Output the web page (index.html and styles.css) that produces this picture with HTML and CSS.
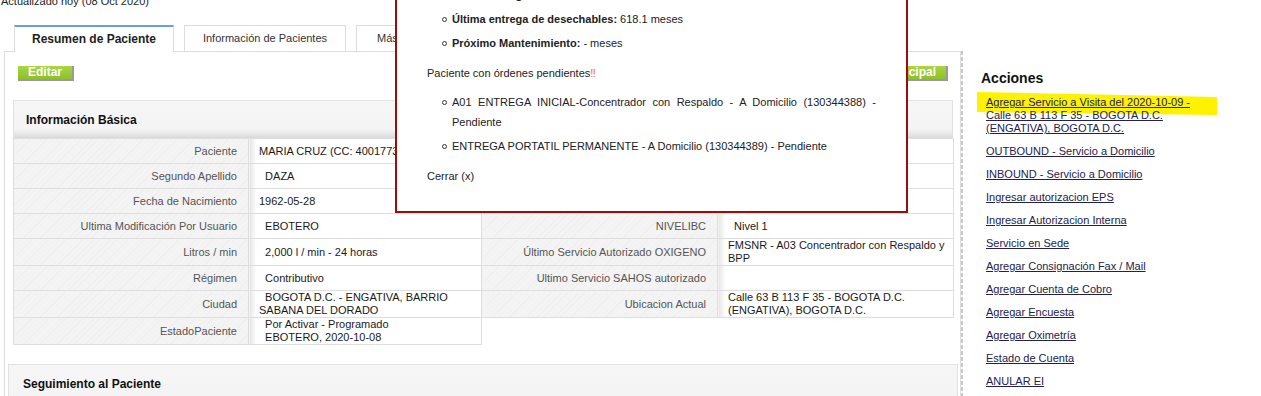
FILE: index.html
```html
<!DOCTYPE html>
<html lang="es">
<head>
    <meta charset="UTF-8">
    <meta name="viewport" content="width=device-width, initial-scale=1.0">
    <title>Resumen de Paciente</title>
    <link rel="stylesheet" href="styles.css">
</head>
<body>
    <div class="page">
        <div class="main">
            <p class="updated">Actualizado hoy (08 Oct 2020)</p>
            <ul class="tabs">
                <li class="tab active">Resumen de Paciente</li>
                <li class="tab tab-wide">Información de Pacientes</li>
                <li class="tab tab-more">Más Información</li>
            </ul>
            <div class="panel">
                <div class="toolbar">
                    <a class="btn" href="#">Editar</a>
                    <a class="btn" href="#">Volver a Principal</a>
                </div>

                <div class="box">
                    <h3 class="box-head">Información Básica</h3>
                    <table class="data">
                        <colgroup>
                            <col style="width: 235px">
                            <col style="width: 233px">
                            <col style="width: 236px">
                            <col style="width: 236px">
                        </colgroup>
                        <tr>
                            <td class="lbl">Paciente</td>
                            <td class="val">MARIA CRUZ (CC: 40017734)</td>
                            <td class="lbl">Teléfono</td>
                            <td class="val">3124567890</td>
                        </tr>
                        <tr>
                            <td class="lbl">Segundo Apellido</td>
                            <td class="val">&nbsp;&nbsp;DAZA</td>
                            <td class="lbl">EPS</td>
                            <td class="val">&nbsp;&nbsp;FAMISANAR</td>
                        </tr>
                        <tr>
                            <td class="lbl">Fecha de Nacimiento</td>
                            <td class="val">1962-05-28</td>
                            <td class="lbl">Tipo de Paciente</td>
                            <td class="val">&nbsp;&nbsp;Oxígeno</td>
                        </tr>
                        <tr>
                            <td class="lbl">Ultima Modificación Por Usuario</td>
                            <td class="val">&nbsp;&nbsp;EBOTERO</td>
                            <td class="lbl">NIVELIBC</td>
                            <td class="val">&nbsp;&nbsp;Nivel 1</td>
                        </tr>
                        <tr>
                            <td class="lbl">Litros / min</td>
                            <td class="val">&nbsp;&nbsp;2,000 l / min - 24 horas</td>
                            <td class="lbl">Último Servicio Autorizado OXIGENO</td>
                            <td class="val">FMSNR - A03 Concentrador con Respaldo y BPP</td>
                        </tr>
                        <tr>
                            <td class="lbl">Régimen</td>
                            <td class="val">&nbsp;&nbsp;Contributivo</td>
                            <td class="lbl">Ultimo Servicio SAHOS autorizado</td>
                            <td class="val"></td>
                        </tr>
                        <tr>
                            <td class="lbl">Ciudad</td>
                            <td class="val">&nbsp;&nbsp;BOGOTA D.C. - ENGATIVA, BARRIO SABANA DEL DORADO</td>
                            <td class="lbl">Ubicacion Actual</td>
                            <td class="val">Calle 63 B 113 F 35 - BOGOTA D.C. (ENGATIVA), BOGOTA D.C.</td>
                        </tr>
                        <tr>
                            <td class="lbl">EstadoPaciente</td>
                            <td class="val">&nbsp;&nbsp;Por Activar - Programado<br>&nbsp;&nbsp;EBOTERO, 2020-10-08</td>
                        </tr>
                    </table>
                </div>

                <div class="box box-follow">
                    <h3 class="box-head">Seguimiento al Paciente</h3>
                </div>
            </div>
        </div>

        <div class="divider"></div>

        <div class="side">
            <h2 class="side-title">Acciones</h2>
            <span class="marker"></span>
            <ul class="actions">
                <li><a href="#">Agregar Servicio a Visita del 2020-10-09 - Calle 63 B 113 F 35 - BOGOTA D.C. (ENGATIVA), BOGOTA D.C.</a></li>
                <li><a href="#">OUTBOUND - Servicio a Domicilio</a></li>
                <li><a href="#">INBOUND - Servicio a Domicilio</a></li>
                <li><a href="#">Ingresar autorizacion EPS</a></li>
                <li><a href="#">Ingresar Autorizacion Interna</a></li>
                <li><a href="#">Servicio en Sede</a></li>
                <li><a href="#">Agregar Consignación Fax / Mail</a></li>
                <li><a href="#">Agregar Cuenta de Cobro</a></li>
                <li><a href="#">Agregar Encuesta</a></li>
                <li><a href="#">Agregar Oximetría</a></li>
                <li><a href="#">Estado de Cuenta</a></li>
                <li><a href="#">ANULAR EI</a></li>
            </ul>
        </div>

        <div class="popup">
            <ul class="popup-list">
                <li><b>Última entrega de oxígeno:</b> 2.0 meses</li>
                <li><b>Última entrega de concentrador:</b> 618.1 meses</li>
                <li><b>Última entrega de desechables:</b> 618.1 meses</li>
                <li><b>Próximo Mantenimiento:</b> - meses</li>
            </ul>
            <p class="popup-text">Paciente con órdenes pendientes<span class="alert">‼</span></p>
            <ul class="popup-list">
                <li class="justify">A01 ENTREGA INICIAL-Concentrador con Respaldo - A Domicilio (130344388) - Pendiente</li>
                <li>ENTREGA PORTATIL PERMANENTE - A Domicilio (130344389) - Pendiente</li>
            </ul>
            <p class="popup-text">Cerrar (x)</p>
        </div>
    </div>
</body>
</html>
```

FILE: styles.css
```css
body {
    margin: 0;
    font-family: "Liberation Sans", Arial, sans-serif;
    font-size: 11px;
    color: #222;
    background-color: #fff;
    overflow: hidden;
}

.page {
    display: flex;
    position: relative;
}

.main {
    width: 961px;
    padding-left: 4px;
    box-sizing: border-box;
    flex-shrink: 0;
}

.updated {
    margin: -5px 0 0 -3px;
    line-height: 13px;
    color: #222;
}

/* tabs */
.tabs {
    display: flex;
    align-items: flex-start;
    gap: 10px;
    list-style: none;
    margin: 17px 0 0 10px;
    padding: 0;
}

.tab {
    width: 160px;
    height: 26px;
    box-sizing: border-box;
    border: 1px solid #ddd;
    border-bottom: none;
    text-align: center;
    white-space: nowrap;
    line-height: 25px;
    color: #333;
    background-color: #fff;
}

.tab-wide {
    width: 162px;
}

.tab-more {
    text-align: left;
    padding-left: 20px;
}

.tab.active {
    height: 27px;
    margin-bottom: -1px;
    border-top: 2px solid #6b9fd9;
    font-size: 12px;
    font-weight: bold;
    color: #222;
    position: relative;
    z-index: 2;
}

/* panel */
.panel {
    border: 1px solid #ddd;
    border-bottom: none;
    padding-top: 14px;
    height: 420px;
}

.toolbar {
    display: flex;
    justify-content: space-between;
    padding: 0 12px 0 13px;
}

.btn {
    display: inline-block;
    padding: 0 10px;
    line-height: 13px;
    font-size: 12px;
    font-weight: bold;
    color: #fff;
    text-decoration: none;
    background: linear-gradient(to bottom, #abd545, #8dc027);
    border-right: 2px solid #9a9a9a;
    border-bottom: 2px solid #9a9a9a;
}

.box {
    margin: 19px 7px 0 8px;
}

.box-head {
    margin: 0;
    height: 37px;
    padding-left: 12px;
    line-height: 38px;
    font-size: 12px;
    font-weight: bold;
    color: #111;
    border: 1px solid #e2e2e2;
    border-bottom: none;
    background: linear-gradient(to bottom, #f6f6f6 0%, #f4f4f4 76%, #e6e6e6 90%, #d9d9d9 100%);
}

.box-follow {
    margin: 19px 2px 0 3px;
}

.box-follow .box-head {
    padding-left: 14px;
    height: 40px;
    line-height: 39px;
}

/* data table */
.data {
    width: 100%;
    table-layout: fixed;
    border-collapse: collapse;
}

.data td {
    height: 24px;
    border: 1px solid #dedede;
    line-height: 13px;
    vertical-align: middle;
}

.lbl {
    text-align: right;
    color: #555;
    padding: 0 11px 0 10px;
    background: repeating-linear-gradient(-45deg, #f4f4f4 0, #f4f4f4 3px, #efefef 3px, #efefef 4px);
}

.val {
    padding: 0 8px 0 10px;
    color: #1a1a1a;
    background: linear-gradient(to right, #e4e4e4 0, #fff 7px);
}

/* dashed divider */
.divider {
    width: 2px;
    margin-top: 51px;
    flex-shrink: 0;
    background: repeating-linear-gradient(to bottom, #c9c9c9 0, #c9c9c9 4px, transparent 4px, transparent 6px);
}

/* actions sidebar */
.side {
    flex: 1;
    position: relative;
    padding: 70px 0 0 18px;
}

.side-title {
    margin: 0;
    font-size: 14px;
    line-height: 16px;
    color: #111;
}

.marker {
    position: absolute;
    left: 14px;
    top: 92px;
    width: 240px;
    height: 23px;
    background-color: #fff200;
    clip-path: polygon(0 0, 100% 5px, 100% 23px, 0 20px);
}

.actions {
    list-style: none;
    margin: 10px 0 0 5px;
    padding: 0;
    width: 222px;
    position: relative;
}

.actions li {
    margin-bottom: 10px;
    line-height: 13px;
}

.actions a {
    color: #22224d;
    text-decoration: underline;
}

/* pending orders popup */
.popup {
    position: absolute;
    left: 395px;
    top: -51px;
    width: 513px;
    box-sizing: border-box;
    padding: 10px 30px 25px;
    border: 2px solid #9c0c0c;
    background-color: #fff;
    z-index: 5;
}

.popup-list {
    margin: 0;
    padding-left: 25px;
    list-style: none;
}

.popup-list li {
    position: relative;
    line-height: 20px;
    margin-bottom: 4px;
}

.popup-list li::before {
    content: "";
    position: absolute;
    left: -10px;
    top: 8px;
    width: 3px;
    height: 3px;
    border: 1px solid #333;
    border-radius: 50%;
}

.popup-list .justify {
    text-align: justify;
}

.popup-text {
    margin: 10px 0 9px;
    line-height: 20px;
}

.popup-text:last-child {
    margin-bottom: 0;
}

.alert {
    color: #e7780e;
}
```
